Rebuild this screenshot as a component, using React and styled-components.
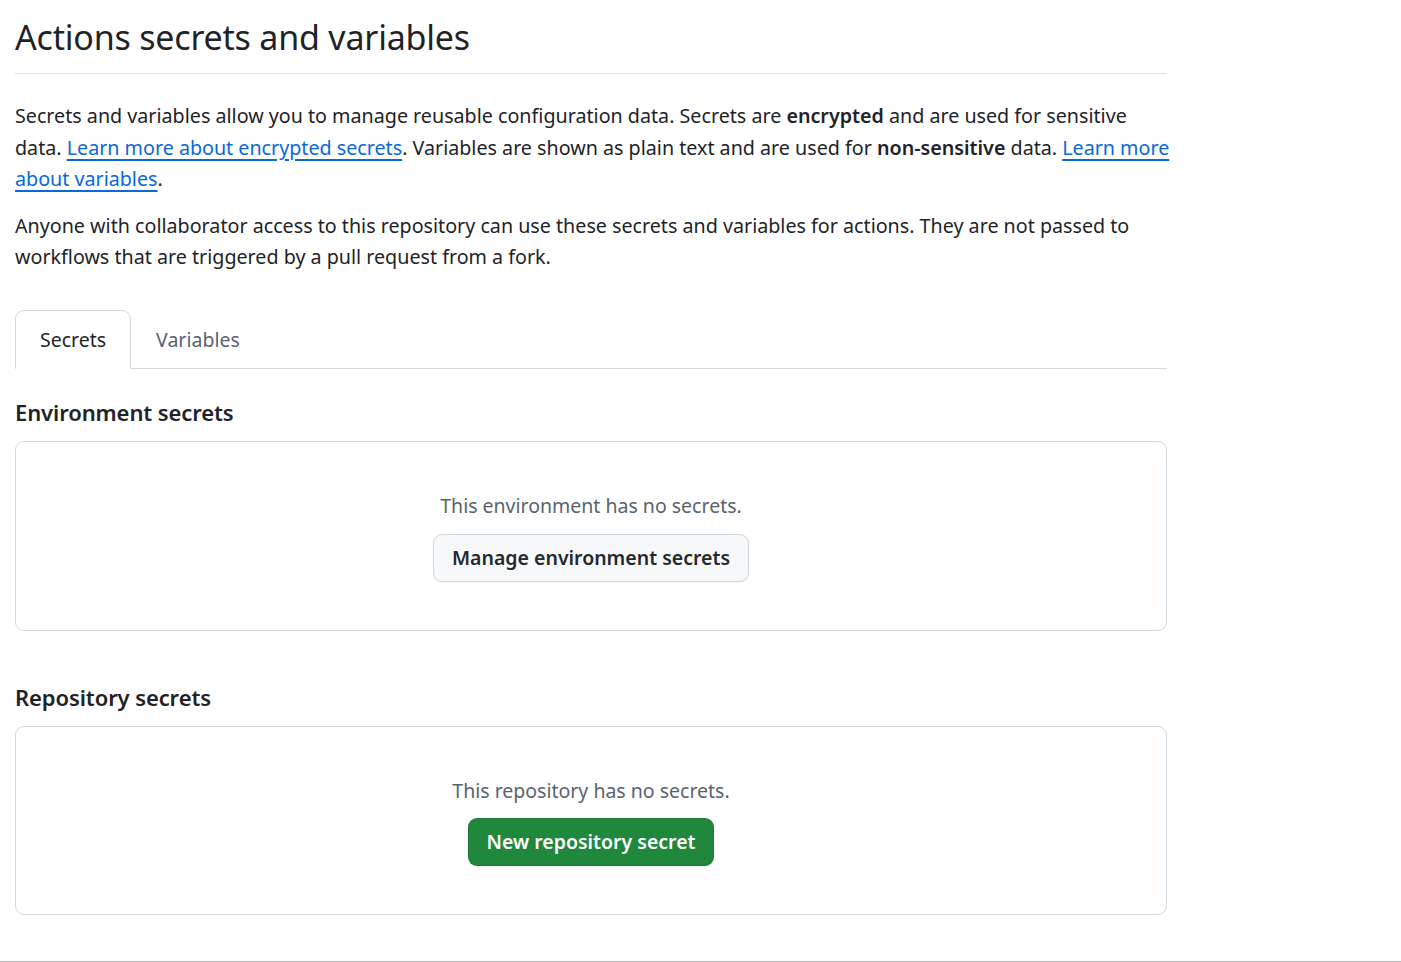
import styled, { createGlobalStyle } from "styled-components";

const GlobalStyle = createGlobalStyle`
  html, body {
    margin: 0;
    padding: 0;
    background: #ffffff;
  }
  body {
    font-family: "Noto Sans", "Open Sans", sans-serif;
    color: #1f2328;
  }
`;

const Page = styled.div`
  min-height: 962px;
  box-sizing: border-box;
  border-bottom: 1px solid #b4b4b4;
  padding: 0 0 0 15px;
`;

const Content = styled.div`
  width: 1152px;
`;

const Subhead = styled.div`
  border-bottom: 1px solid #dde1e5;
  padding: 13px 0 12px;
  margin-bottom: 26px;
`;

const Title = styled.h2`
  margin: 0;
  font-size: 34px;
  font-weight: 400;
  line-height: 48px;
  letter-spacing: -0.2px;
`;

const Text = styled.p`
  margin: 0 -7px 15px 0;
  font-size: 19.7px;
  line-height: 31.5px;
`;

const Link = styled.a`
  color: #0969da;
  text-decoration: underline;
  text-underline-offset: 4px;
  text-decoration-thickness: 2px;
`;

const Strong = styled.strong`
  font-weight: 600;
`;

const Tabs = styled.nav`
  display: flex;
  margin-top: 37px;
  border-bottom: 1px solid #d1d9e0;
`;

const Tab = styled.a`
  display: block;
  padding: 13px 24px;
  margin-bottom: -1px;
  font-size: 19.5px;
  line-height: 31.5px;
  color: ${(p) => (p.$active ? "#1f2328" : "#59636e")};
  background: ${(p) => (p.$active ? "#ffffff" : "transparent")};
  border: 1px solid ${(p) => (p.$active ? "#d1d9e0" : "transparent")};
  border-bottom-color: ${(p) => (p.$active ? "#ffffff" : "transparent")};
  border-radius: 9px 9px 0 0;
`;

const SectionTitle = styled.h3`
  margin: ${(p) => (p.$first ? "25px" : "48px")} 0 11px;
  font-size: 22px;
  font-weight: 600;
  line-height: 36px;
  letter-spacing: -0.1px;
`;

const Blank = styled.div`
  border: 1px solid #d1d9e0;
  border-radius: 9px;
  padding: 48px;
  display: flex;
  flex-direction: column;
  align-items: center;
`;

const BlankText = styled.p`
  margin: 0;
  font-size: 19.5px;
  line-height: 31.5px;
  color: #59636e;
`;

const Button = styled.button`
  margin-top: 12px;
  height: 48px;
  box-sizing: border-box;
  padding: 0 18px;
  font-family: inherit;
  font-size: 19.5px;
  font-weight: 600;
  line-height: 31.5px;
  border-radius: 9px;
  cursor: pointer;
  color: ${(p) => (p.$primary ? "#ffffff" : "#25292e")};
  background: ${(p) => (p.$primary ? "#1f883d" : "#f6f8fa")};
  border: 1px solid ${(p) => (p.$primary ? "rgba(31,35,40,0.15)" : "#d1d9e0")};
  box-shadow: 0 1px 0 rgba(31, 35, 40, 0.04);
`;

export default function App() {
  return (
    <>
      <GlobalStyle />
      <Page>
        <Content>
          <Subhead>
            <Title>Actions secrets and variables</Title>
          </Subhead>
          <Text>
            Secrets and variables allow you to manage reusable configuration data. Secrets are{" "}
            <Strong>encrypted</Strong> and are used for sensitive data.{" "}
            <Link href="#">Learn more about encrypted secrets</Link>. Variables are shown as plain
            text and are used for <Strong>non-sensitive</Strong> data.{" "}
            <Link href="#">Learn more about variables</Link>.
          </Text>
          <Text>
            Anyone with collaborator access to this repository can use these secrets and variables
            for actions. They are not passed to workflows that are triggered by a pull request from a
            fork.
          </Text>
          <Tabs>
            <Tab $active>Secrets</Tab>
            <Tab>Variables</Tab>
          </Tabs>
          <SectionTitle $first>Environment secrets</SectionTitle>
          <Blank>
            <BlankText>This environment has no secrets.</BlankText>
            <Button>Manage environment secrets</Button>
          </Blank>
          <SectionTitle>Repository secrets</SectionTitle>
          <Blank>
            <BlankText>This repository has no secrets.</BlankText>
            <Button $primary>New repository secret</Button>
          </Blank>
        </Content>
      </Page>
    </>
  );
}
